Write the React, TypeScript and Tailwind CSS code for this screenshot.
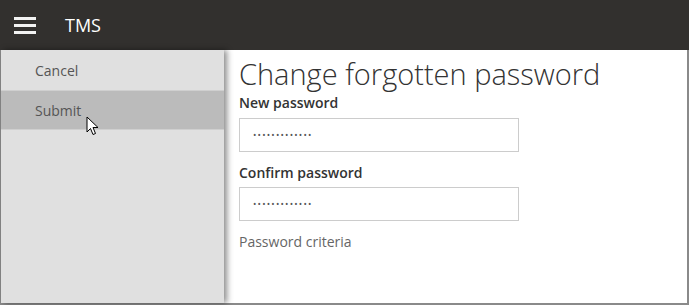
import React from "react";

export default function App() {
  return (
    <div className="w-[689px] h-[305px] flex flex-col bg-white overflow-hidden" style={{ fontFamily: "'Open Sans', Lato, sans-serif" }}>
      {/* Top bar */}
      <header className="h-[50px] shrink-0 bg-[#32302e] flex items-center">
        <div className="ml-[14px] w-[22px] flex flex-col gap-[4px]">
          <span className="block h-[3px] bg-[#f2f2f2]" />
          <span className="block h-[3px] bg-[#f2f2f2]" />
          <span className="block h-[3px] bg-[#f2f2f2]" />
        </div>
        <span className="ml-[29px] text-[18px] text-white">TMS</span>
      </header>

      <div className="flex-1 flex border-l border-r-2 border-b-2 border-[#8a8a8a]">
        {/* Sidebar */}
        <aside className="relative w-[223px] shrink-0 bg-[#e0e0e0] shadow-[3px_0_6px_rgba(0,0,0,0.45)] z-10">
          <div className="h-[40px] flex items-center pl-[34px] text-[14px] text-[#555]">Cancel</div>
          <div className="h-[40px] flex items-center pl-[34px] text-[14px] text-[#555] bg-[#bbbbbb] border-t border-b border-[#cfcfcf]">Submit</div>
          <svg className="absolute left-[85px] top-[66px]" width="13" height="20" viewBox="0 0 13 20">
            <path d="M1 1 L1 16 L4.5 12.5 L7 18.5 L9.5 17.5 L7 11.5 L12 11.5 Z" fill="#fff" stroke="#000" strokeWidth="1" strokeLinejoin="round" />
          </svg>
        </aside>

        {/* Main */}
        <main className="flex-1 pl-[15px] pt-[7px]">
          <h1 className="text-[29px] font-light leading-[34px] text-[#333]">Change forgotten password</h1>
          <label className="block mt-[3px] text-[14px] font-semibold text-[#333] leading-[18px]">New password</label>
          <div className="mt-[6px] w-[280px] h-[34px] border border-[#cccccc] flex items-center pl-[13px] text-[9px] tracking-[1.2px] text-[#555]">•••••••••••••</div>
          <label className="block mt-[12px] text-[14px] font-semibold text-[#333] leading-[18px]">Confirm password</label>
          <div className="mt-[5px] w-[280px] h-[34px] border border-[#cccccc] flex items-center pl-[13px] text-[9px] tracking-[1.2px] text-[#555]">•••••••••••••</div>
          <p className="mt-[12px] text-[14px] text-[#666] leading-[18px]">Password criteria</p>
        </main>
      </div>
    </div>
  );
}
